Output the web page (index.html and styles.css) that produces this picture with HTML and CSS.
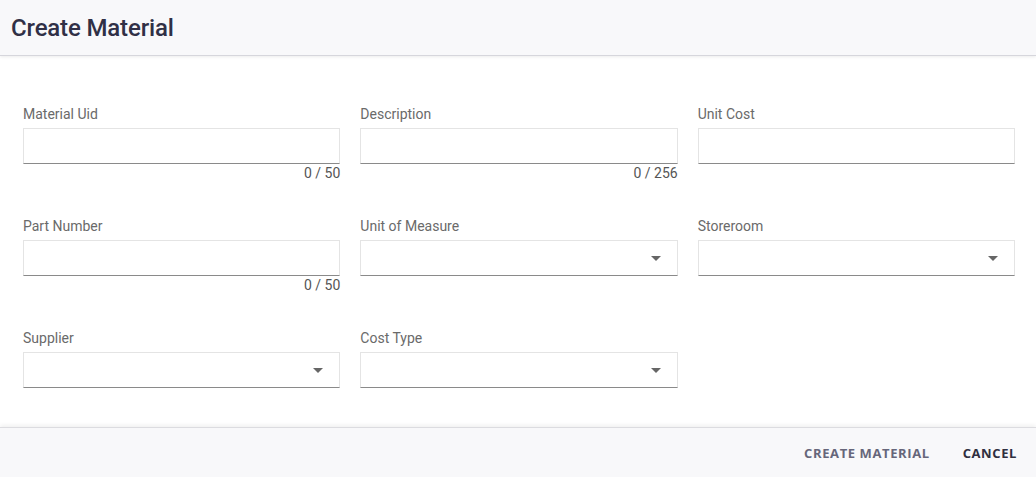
FILE: index.html
```html
<!DOCTYPE html>
<html>
<head>
    <link rel="stylesheet" href="styles.css">
</head>
<body>
    <div class="dialog">
        <div class="dialog-header">
            <h2>Create Material</h2>
        </div>
        <div class="dialog-body">
            <div class="field">
                <label>Material Uid</label>
                <div class="input"></div>
                <div class="hint">0 / 50</div>
            </div>
            <div class="field">
                <label>Description</label>
                <div class="input"></div>
                <div class="hint">0 / 256</div>
            </div>
            <div class="field">
                <label>Unit Cost</label>
                <div class="input"></div>
                <div class="hint"></div>
            </div>
            <div class="field">
                <label>Part Number</label>
                <div class="input"></div>
                <div class="hint">0 / 50</div>
            </div>
            <div class="field">
                <label>Unit of Measure</label>
                <div class="input select"><span class="caret"></span></div>
                <div class="hint"></div>
            </div>
            <div class="field">
                <label>Storeroom</label>
                <div class="input select"><span class="caret"></span></div>
                <div class="hint"></div>
            </div>
            <div class="field">
                <label>Supplier</label>
                <div class="input select"><span class="caret"></span></div>
                <div class="hint"></div>
            </div>
            <div class="field">
                <label>Cost Type</label>
                <div class="input select"><span class="caret"></span></div>
                <div class="hint"></div>
            </div>
        </div>
        <div class="dialog-footer">
            <button class="btn btn-muted">Create Material</button>
            <button class="btn">Cancel</button>
        </div>
    </div>
</body>
</html>
```

FILE: styles.css
```css
body {
    margin: 0;
    padding: 0;
    width: 100vw;
    height: 100vh;
    font-family: Roboto, 'Liberation Sans', sans-serif;
    background: #fff;
    overflow: hidden;
}
.dialog {
    height: 100%;
    display: flex;
    flex-direction: column;
}
.dialog-header {
    height: 55px;
    background: #f8f8fa;
    border-bottom: 1px solid #d6d6dc;
    box-shadow: 0 1px 3px rgba(0, 0, 0, 0.08);
    display: flex;
    align-items: center;
    padding: 0 11px;
    flex-shrink: 0;
}
.dialog-header h2 {
    margin: 0;
    font-size: 24px;
    font-weight: 500;
    color: #303046;
    letter-spacing: -0.15px;
}
.dialog-body {
    flex: 1;
    display: grid;
    grid-template-columns: repeat(3, 1fr);
    column-gap: 20px;
    row-gap: 36px;
    align-content: start;
    padding: 50px 21px 0 23px;
}
.field {
    display: flex;
    flex-direction: column;
}
.field label {
    font-size: 14px;
    line-height: 16px;
    color: #6a6a6a;
    margin-bottom: 6px;
}
.input {
    height: 34px;
    border: 1px solid #e4e4e4;
    border-bottom-color: #8a8a8a;
    background: #fff;
    position: relative;
}
.select .caret {
    position: absolute;
    right: 16px;
    top: 15px;
    width: 0;
    height: 0;
    border-left: 5px solid transparent;
    border-right: 5px solid transparent;
    border-top: 5px solid #666;
}
.hint {
    height: 18px;
    font-size: 14px;
    line-height: 18px;
    color: #555;
    text-align: right;
}
.dialog-footer {
    height: 48px;
    flex-shrink: 0;
    background: #f8f8fa;
    border-top: 1px solid #dcdce0;
    box-shadow: 0 -2px 4px rgba(0, 0, 0, 0.06);
    display: flex;
    justify-content: flex-end;
    align-items: center;
    padding: 1px 8px 0;
    gap: 11px;
}
.btn {
    font-family: 'Open Sans', 'Liberation Sans', sans-serif;
    font-size: 13px;
    font-weight: 700;
    letter-spacing: 0.6px;
    text-transform: uppercase;
    color: #2f2f3f;
    background: transparent;
    border: none;
    padding: 6px 11px;
    cursor: pointer;
}
.btn-muted {
    color: #66667a;
}
```
